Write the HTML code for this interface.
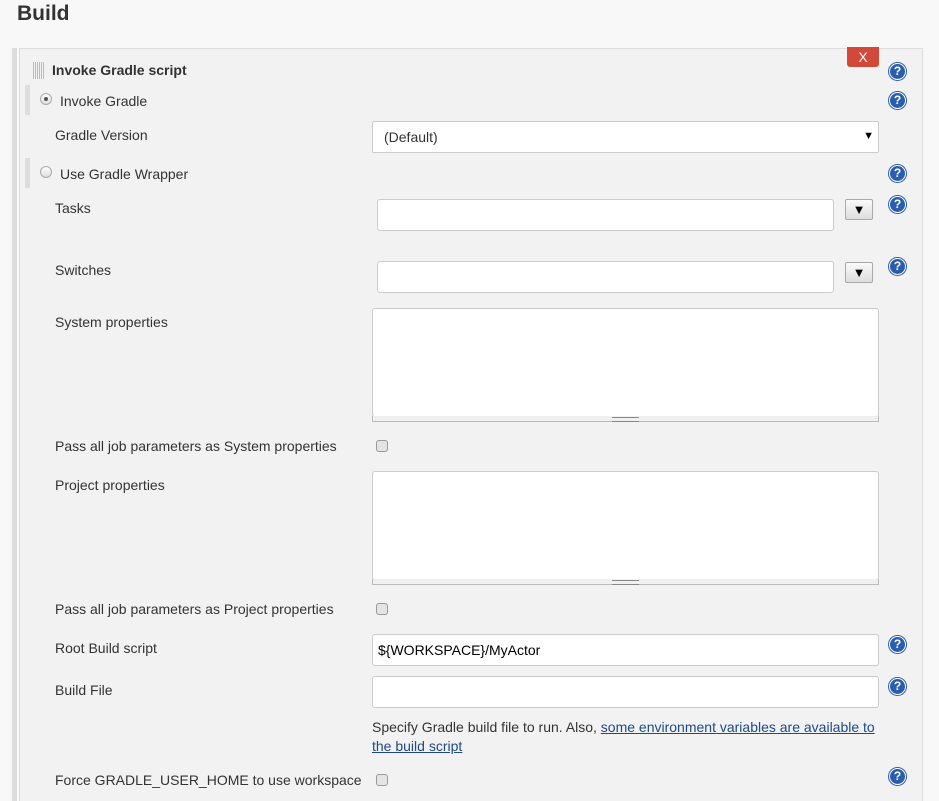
<!DOCTYPE html>
<html style="width:939px;height:801px;overflow:hidden"><head><meta charset="utf-8"><style>
*{box-sizing:border-box;margin:0;padding:0}
body{width:939px;height:801px;overflow:hidden;background:#f8f8f8;font-family:"Liberation Sans",sans-serif;font-size:14px;color:#333;position:relative}
.a{position:absolute}
.lbl{position:absolute;left:55px;line-height:16px}
.help{position:absolute;left:889px;width:17px;height:17px;border-radius:50%;background:#2a5db0;border:1.5px solid #fff;box-shadow:0 0 0 1px #2a5db0;color:#fff;font-weight:bold;font-size:12px;line-height:14px;text-align:center}
.in{position:absolute;background:#fff;border:1px solid #ccc;border-radius:3px}
.btn{position:absolute;left:845px;width:28px;height:21px;border:1px solid #aaa;border-radius:2px;background:linear-gradient(#fafafa,#ddd);font-size:13px;text-align:center;line-height:19px;color:#000}
.cb{position:absolute;left:376px;width:12px;height:12px;border:1px solid #999;border-radius:3px;background:#e4e4e4}
.grip{position:absolute;left:372px;width:507px;height:6px;border:1px solid #bbb;border-top:none;background:#f0f0f0}
.grip:after{content:"";position:absolute;left:239px;top:1px;width:27px;height:3px;border-top:1px solid #888;border-bottom:1px solid #888}
.rbar{position:absolute;left:25px;width:5px;background:#ddd}
.radio{position:absolute;left:40px;width:12px;height:12px;border-radius:50%;border:1px solid #aaa;background:linear-gradient(#fff,#ddd)}
</style></head><body>
<div class="a" style="left:17px;top:1px;font-size:21px;font-weight:bold;line-height:26px">Build</div>
<div class="a" style="left:12px;top:48px;width:5px;height:753px;background:#ddd"></div>
<div class="a" style="left:19px;top:48px;width:904px;height:753px;background:#f2f2f2;border:1px solid #ddd;border-bottom:none"></div>
<div class="a" style="left:33px;top:62px;width:11px;height:17px;background-image:repeating-linear-gradient(90deg,#bbb 0 1px,transparent 1px 2px)"></div>
<div class="a" style="left:52px;top:62px;font-weight:bold;line-height:16px">Invoke Gradle script</div>
<div class="a" style="left:847px;top:47px;width:32px;height:20px;background:#d24939;border-radius:0 0 3px 3px;color:#fff;text-align:center;font-size:14px;line-height:20px">X</div>

<div class="help" style="top:63px">?</div>
<div class="help" style="top:92px">?</div>
<div class="help" style="top:165px">?</div>
<div class="help" style="top:196px">?</div>
<div class="help" style="top:258px">?</div>
<div class="help" style="top:636px">?</div>
<div class="help" style="top:678px">?</div>
<div class="help" style="top:768px">?</div>

<div class="rbar" style="top:85px;height:30px"></div>
<div class="radio" style="top:93px"><div style="position:absolute;left:3px;top:3px;width:4px;height:4px;border-radius:50%;background:#555"></div></div>
<div class="a" style="left:60px;top:93px;line-height:16px">Invoke Gradle</div>
<div class="lbl" style="top:127px">Gradle Version</div>
<div class="in" style="left:372px;top:121px;width:507px;height:32px;border-radius:2px"><span style="position:absolute;left:11px;top:7px">(Default)</span><span style="position:absolute;right:4px;top:8px;font-size:11px;color:#000">▼</span></div>

<div class="rbar" style="top:158px;height:30px"></div>
<div class="radio" style="top:166px"></div>
<div class="a" style="left:60px;top:166px;line-height:16px">Use Gradle Wrapper</div>

<div class="lbl" style="top:200px">Tasks</div>
<div class="in" style="left:377px;top:199px;width:457px;height:32px"></div>
<div class="btn" style="top:199px">▼</div>
<div class="lbl" style="top:262px">Switches</div>
<div class="in" style="left:377px;top:261px;width:457px;height:32px"></div>
<div class="btn" style="top:262px">▼</div>

<div class="lbl" style="top:314px">System properties</div>
<div class="in" style="left:372px;top:308px;width:507px;height:109px"></div>
<div class="grip" style="top:416px"></div>
<div class="lbl" style="top:438px">Pass all job parameters as System properties</div>
<div class="cb" style="top:440px"></div>

<div class="lbl" style="top:477px">Project properties</div>
<div class="in" style="left:372px;top:471px;width:507px;height:109px"></div>
<div class="grip" style="top:579px"></div>
<div class="lbl" style="top:601px">Pass all job parameters as Project properties</div>
<div class="cb" style="top:603px"></div>

<div class="lbl" style="top:640px">Root Build script</div>
<div class="in" style="left:372px;top:634px;width:507px;height:32px"><span style="position:absolute;left:5px;top:7px;color:#000">${WORKSPACE}/MyActor</span></div>
<div class="lbl" style="top:682px">Build File</div>
<div class="in" style="left:372px;top:676px;width:507px;height:32px"></div>
<div class="a" style="left:372px;top:718px;width:510px;line-height:19px">Specify Gradle build file to run. Also, <span style="color:#204a87;text-decoration:underline">some environment variables are available to the build script</span></div>

<div class="lbl" style="top:772px">Force GRADLE_USER_HOME to use workspace</div>
<div class="cb" style="top:774px"></div>
</body></html>
